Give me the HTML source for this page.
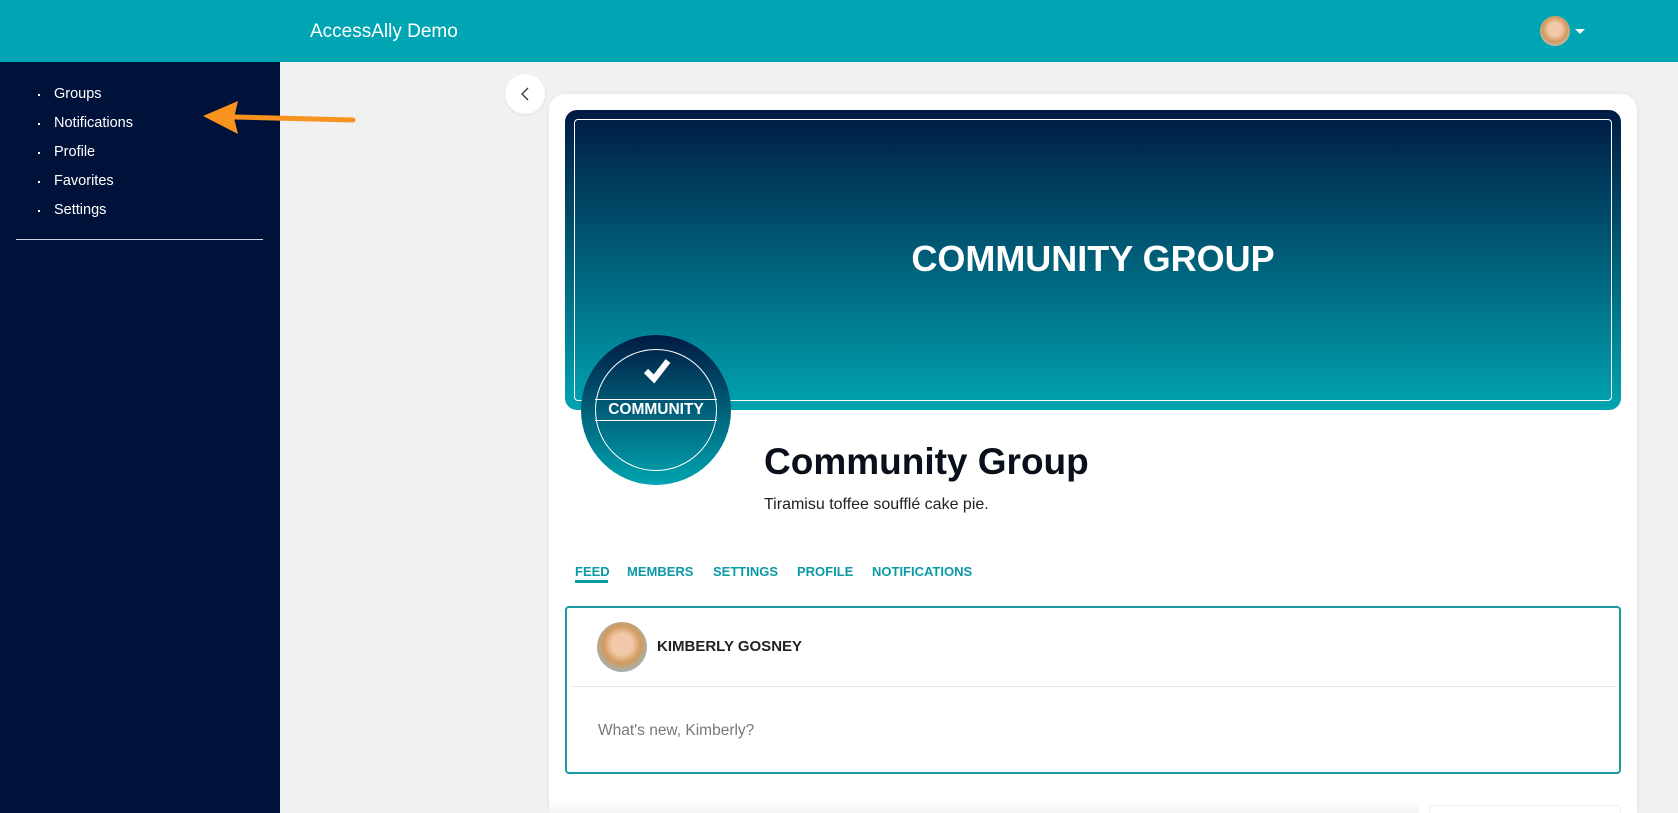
<!DOCTYPE html>
<html><head><meta charset="utf-8"><style>
*{box-sizing:border-box;margin:0;padding:0}
html{width:1678px;height:813px;overflow:hidden}
body{width:1678px;height:813px;overflow:hidden;background:#f1f1f1;font-family:"Liberation Sans",sans-serif;position:relative}
.hdr{position:absolute;left:0;top:0;width:1678px;height:62px;background:#00a5b3}
.title{position:absolute;left:310px;top:21px;color:#fff;font-size:19px}
.side{position:absolute;left:0;top:62px;width:280px;height:751px;background:#00123a}
.side .it{position:absolute;left:54px;color:#fff;font-size:14.5px}
.side .it:before{content:"";position:absolute;left:-16px;top:8px;width:2px;height:2px;background:#fff}
.card{position:absolute;left:549px;top:94px;width:1088px;height:719px;background:#fff;border-radius:16px 16px 0 0;box-shadow:0 0 6px rgba(0,0,0,.06)}
.banner{position:absolute;left:565px;top:110px;width:1056px;height:300px;border-radius:12px;background:linear-gradient(#001a42,#00a4b0)}
.banner .in{position:absolute;left:9px;top:9px;right:9px;bottom:9px;border:1px solid #fff;border-radius:4px}
.tabs span{position:absolute;top:564px;color:#0a9aa5;font-weight:bold;font-size:13px}
.post{position:absolute;left:565px;top:606px;width:1056px;height:168px;border:2px solid #1a9aa5;border-radius:4px}
</style></head><body>
<div class="hdr"><div class="title">AccessAlly Demo</div>
<div style="position:absolute;left:1540px;top:16px;width:30px;height:30px;border-radius:50%;background:radial-gradient(circle at 50% 45%,#f2c9a8 30%,#d29a5e 55%,#b9c7c9 80%)"></div>
<div style="position:absolute;left:1575px;top:29px;border-left:5px solid transparent;border-right:5px solid transparent;border-top:5px solid #fff"></div></div>
<div class="side">
<div class="it" style="top:24px">Groups</div>
<div class="it" style="top:53px">Notifications</div>
<div class="it" style="top:82px">Profile</div>
<div class="it" style="top:111px">Favorites</div>
<div class="it" style="top:140px">Settings</div>
<div style="position:absolute;left:16px;top:177px;width:247px;height:1px;background:#cfd6e0"></div>
</div>
<svg style="position:absolute;left:0;top:0" width="400" height="160"><path d="M353 120 L235 117" stroke="#f7931e" stroke-width="5" stroke-linecap="round"/><path d="M203 116 L238 101 L234 118 L238 134 Z" fill="#f7931e"/></svg>
<div style="position:absolute;left:505px;top:74px;width:40px;height:40px;border-radius:50%;background:#fff;box-shadow:0 1px 3px rgba(0,0,0,.08)"><svg width="40" height="40"><path d="M23 14 L17 20 L23 26" fill="none" stroke="#333" stroke-width="1.3"/></svg></div>
<div class="card"></div>
<div class="banner"><div class="in"></div><div style="position:absolute;left:0;right:0;top:128px;text-align:center;color:#fff;font-weight:bold;font-size:36px">COMMUNITY GROUP</div></div>
<div style="position:absolute;left:581px;top:335px;width:150px;height:150px;border-radius:50%;background:linear-gradient(#001a42,#00a4b0);overflow:hidden">
<div style="position:absolute;left:14px;top:14px;width:122px;height:122px;border-radius:50%;border:1px solid #fff"></div>
<div style="position:absolute;left:14px;top:64px;width:122px;height:22px;border-top:1px solid #fff;border-bottom:1px solid #fff;color:#fff;font-weight:bold;font-size:15.5px;text-align:center;line-height:20px">COMMUNITY</div>
<svg style="position:absolute;left:62px;top:22px" width="28" height="28"><path d="M3 14 L11 22 L25 4" fill="none" stroke="#fff" stroke-width="6"/></svg>
</div>
<div style="position:absolute;left:764px;top:441px;font-size:37px;font-weight:bold;color:#0a0f1c">Community Group</div>
<div style="position:absolute;left:764px;top:496px;font-size:16px;color:#222">Tiramisu toffee soufflé cake pie.</div>
<div class="tabs"><span style="left:575px">FEED</span><span style="left:627px">MEMBERS</span><span style="left:713px">SETTINGS</span><span style="left:797px">PROFILE</span><span style="left:872px">NOTIFICATIONS</span></div>
<div style="position:absolute;left:575px;top:580px;width:33px;height:3px;background:#0a9aa5"></div>
<div class="post">
<div style="position:absolute;left:30px;top:14px;width:50px;height:50px;border-radius:50%;background:radial-gradient(circle at 50% 45%,#f2c9a8 28%,#d29a5e 50%,#9fb4b8 75%)"></div>
<div style="position:absolute;left:90px;top:30px;font-weight:bold;font-size:15px;color:#222">KIMBERLY GOSNEY</div>
<div style="position:absolute;left:4px;right:4px;top:78px;height:1px;background:#e6e6e6"></div>
<div style="position:absolute;left:31px;top:114px;font-size:15.5px;color:#777">What's new, Kimberly?</div>
</div>
<div style="position:absolute;left:549px;top:800px;width:870px;height:13px;background:linear-gradient(#fff,#f4f4f4)"></div>
<div style="position:absolute;left:1429px;top:805px;width:192px;height:8px;border:1px solid #eee;border-bottom:none;border-radius:4px 4px 0 0;background:#fff"></div>
</body></html>
